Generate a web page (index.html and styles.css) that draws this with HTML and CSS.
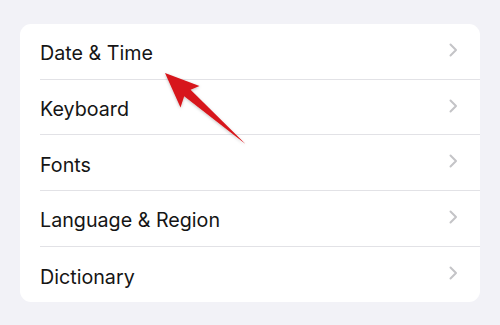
FILE: index.html
```html
<!DOCTYPE html>
<html>
<head>
<meta charset="utf-8">
<link rel="stylesheet" href="styles.css">
</head>
<body>
<div class="page">
  <ul class="list">
    <li class="row"><div class="row-inner"><span class="label">Date &amp; Time</span><svg class="chev" viewBox="0 0 9 14"><path d="M1.5 1.5 L7 7 L1.5 12.5"/></svg></div></li>
    <li class="row"><div class="row-inner"><span class="label">Keyboard</span><svg class="chev" viewBox="0 0 9 14"><path d="M1.5 1.5 L7 7 L1.5 12.5"/></svg></div></li>
    <li class="row"><div class="row-inner"><span class="label">Fonts</span><svg class="chev" viewBox="0 0 9 14"><path d="M1.5 1.5 L7 7 L1.5 12.5"/></svg></div></li>
    <li class="row"><div class="row-inner"><span class="label">Language &amp; Region</span><svg class="chev" viewBox="0 0 9 14"><path d="M1.5 1.5 L7 7 L1.5 12.5"/></svg></div></li>
    <li class="row"><div class="row-inner"><span class="label">Dictionary</span><svg class="chev" viewBox="0 0 9 14"><path d="M1.5 1.5 L7 7 L1.5 12.5"/></svg></div></li>
  </ul>
</div>
<svg class="arrow" viewBox="0 0 500 325" width="500" height="325">
  <defs>
    <filter id="sh" x="-20%" y="-20%" width="140%" height="140%">
      <feDropShadow dx="0" dy="1" stdDeviation="1.5" flood-color="#000" flood-opacity="0.25"/>
    </filter>
  </defs>
  <polygon filter="url(#sh)" fill="#d7171b" points="165,73 199.5,86 190.6,89.8 245.5,144 184.2,96.2 180.5,107.5"/>
</svg>
</body>
</html>
```

FILE: styles.css
```css
html, body {
  margin: 0;
  padding: 0;
  background: #f2f2f7;
}
body {
  width: 500px;
  height: 325px;
  overflow: hidden;
  position: relative;
  font-family: Inter, "Noto Sans", "Liberation Sans", sans-serif;
}
.page {
  padding: 24px 20px;
}
.list {
  list-style: none;
  margin: 0;
  padding: 0;
  background: #ffffff;
  border-radius: 11px;
  overflow: hidden;
}
.row {
  padding-left: 20px;
}
.row-inner {
  height: 55.7px;
  box-sizing: border-box;
  display: flex;
  align-items: center;
  justify-content: space-between;
  padding-right: 22px;
  border-bottom: 1px solid #e2e2e6;
}
.row:last-child .row-inner {
  border-bottom: none;
}
.label {
  font-size: 19.7px;
  font-weight: 400;
  color: #151515;
  padding-top: 4px;
  letter-spacing: 0;
}
.chev {
  width: 9px;
  height: 14px;
  margin-bottom: 3px;
  fill: none;
  stroke: #c4c4c7;
  stroke-width: 2;
  stroke-linecap: round;
  stroke-linejoin: round;
}
.arrow {
  position: absolute;
  left: 0;
  top: 0;
  pointer-events: none;
}
```
